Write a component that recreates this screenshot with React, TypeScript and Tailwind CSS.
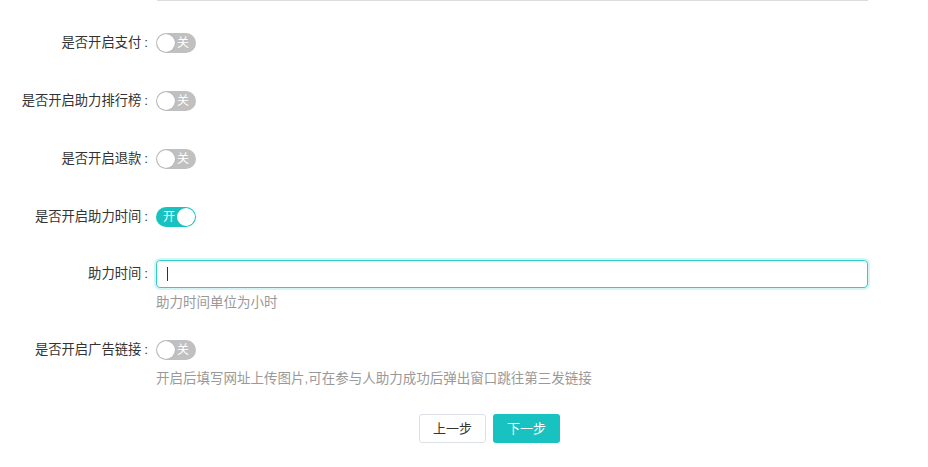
import React from "react";

function Toggle({ on }: { on: boolean }) {
  if (on) {
    return (
      <div className="relative w-[40px] h-[20px] rounded-full bg-[#17c2c1] flex items-center">
        <span className="pl-[7px] text-[12px] leading-none text-white">开</span>
        <span className="absolute right-[1px] top-[1px] w-[18px] h-[18px] rounded-full bg-white" />
      </div>
    );
  }
  return (
    <div className="relative w-[40px] h-[20px] rounded-full bg-[#c0c0c0] flex items-center justify-end">
      <span className="pr-[7px] text-[12px] leading-none text-white">关</span>
      <span className="absolute left-[1px] top-[1px] w-[18px] h-[18px] rounded-full bg-white shadow-[0_0_1px_rgba(0,0,0,0.3)]" />
    </div>
  );
}

function Row({ label, children, help }: { label: string; children: React.ReactNode; help?: string }) {
  return (
    <div className="flex">
      <div className="w-[150px] h-[28px] flex items-center justify-end text-[#333] text-[13.3px] pr-[2px]">
        {label}
        <span className="ml-[3px]">:</span>
      </div>
      <div className="ml-[6px] flex-1">
        <div className="h-[28px] flex items-center">{children}</div>
        {help && <div className="leading-[24px] mt-[3px] text-[13.5px] text-[#999]">{help}</div>}
      </div>
    </div>
  );
}

export default function App() {
  return (
    <div
      className="w-[928px] h-[467px] bg-white text-[13px] overflow-hidden"
      style={{ fontFamily: '"Liberation Sans", "Noto Sans CJK SC", sans-serif' }}
    >
      <div className="ml-[157px] w-[711px] h-[1px] bg-[#dcdcdc]" />
      <div className="mt-[28px] flex flex-col">
        <div className="mb-[30px]">
          <Row label="是否开启支付">
            <Toggle on={false} />
          </Row>
        </div>
        <div className="mb-[30px]">
          <Row label="是否开启助力排行榜">
            <Toggle on={false} />
          </Row>
        </div>
        <div className="mb-[30px]">
          <Row label="是否开启退款">
            <Toggle on={false} />
          </Row>
        </div>
        <div className="mb-[29px]">
          <Row label="是否开启助力时间">
            <Toggle on={true} />
          </Row>
        </div>
        <div className="mb-[21px]">
          <Row label="助力时间" help="助力时间单位为小时">
            <div className="w-[712px] h-[28px] rounded-[4px] border border-[#2ccfc7] shadow-[0_0_0_2px_rgba(44,207,199,0.2)] flex items-center pl-[10px]">
              <span className="w-[1px] h-[14px] bg-[#333]" />
            </div>
          </Row>
        </div>
        <div className="mb-[23px]">
          <Row label="是否开启广告链接" help="开启后填写网址上传图片,可在参与人助力成功后弹出窗口跳往第三发链接">
            <Toggle on={false} />
          </Row>
        </div>
        <div className="flex gap-[7px] pl-[419px]">
          <button className="w-[67px] h-[29px] rounded-[3px] border border-[#dcdfe6] bg-white text-[#333]">
            上一步
          </button>
          <button className="w-[67px] h-[29px] rounded-[3px] bg-[#17c2c1] text-white">下一步</button>
        </div>
      </div>
    </div>
  );
}
